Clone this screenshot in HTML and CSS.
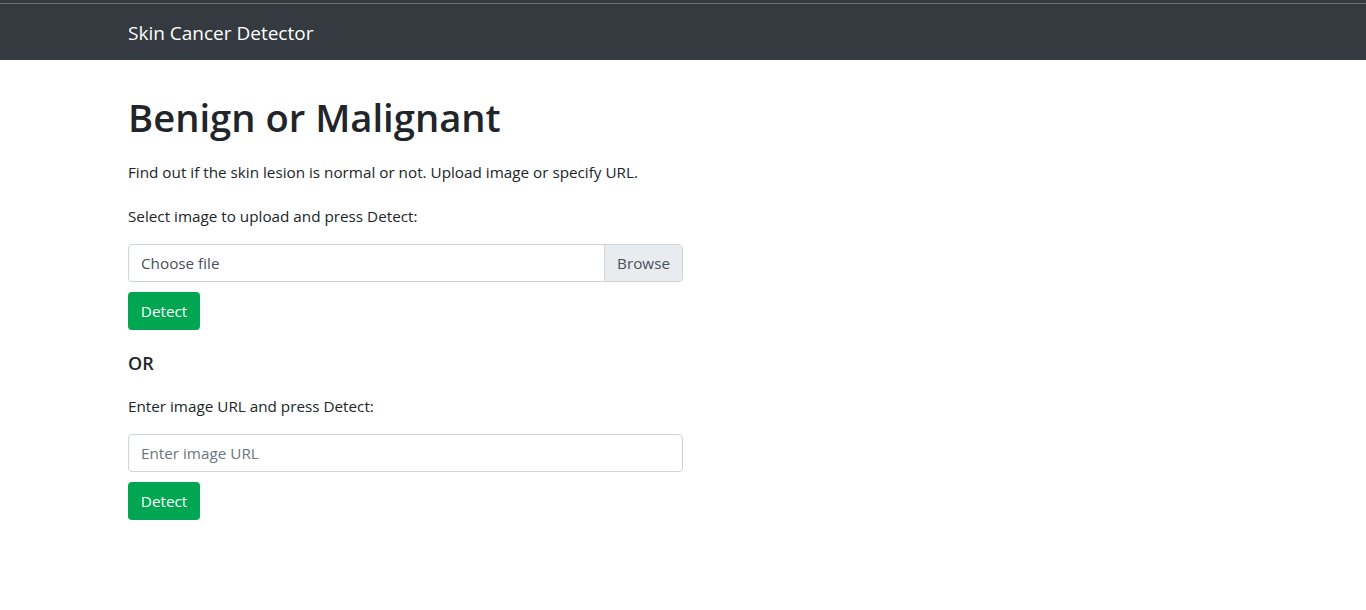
FILE: index.html
```html
<!DOCTYPE html>
<html lang="en">
<head>
<meta charset="utf-8">
<title>Skin Cancer Detector</title>
<link rel="stylesheet" href="styles.css">
</head>
<body>
<div class="topline"></div>
<nav class="navbar">
  <div class="container">
    <a class="brand" href="#">Skin Cancer Detector</a>
  </div>
</nav>
<main class="container main">
  <h1 class="title">Benign or Malignant</h1>
  <p class="lead-text">Find out if the skin lesion is normal or not. Upload image or specify URL.</p>
  <form class="form">
    <p class="label">Select image to upload and press Detect:</p>
    <div class="file">
      <span class="file-text">Choose file</span>
      <span class="file-btn">Browse</span>
    </div>
    <button type="button" class="btn">Detect</button>
    <h5 class="or">OR</h5>
    <p class="label">Enter image URL and press Detect:</p>
    <input class="input" type="text" placeholder="Enter image URL">
    <button type="button" class="btn">Detect</button>
  </form>
</main>
</body>
</html>
```
FILE: styles.css
```css
* { box-sizing: border-box; }
html, body { margin: 0; padding: 0; }
body {
  font-family: "Open Sans", "Noto Sans", sans-serif;
  font-size: 15.25px;
  line-height: 24px;
  color: #212529;
  background: #fff;
}
.container {
  width: 1140px;
  margin: 0 auto;
  padding: 0 15px;
}
.topline {
  height: 4px;
  background: #343a40;
  border-bottom: 1px solid #6e7175;
}
.navbar {
  background: #343a40;
  height: 56px;
  display: flex;
  align-items: center;
}
.brand {
  color: #fff;
  text-decoration: none;
  font-size: 19px;
  line-height: 30px;
  position: relative;
  top: 1px;
}
.main { padding-top: 33px; }
.title {
  margin: 0 0 19px;
  font-size: 38.2px;
  line-height: 48px;
  font-weight: 600;
}
.lead-text { margin: 0 0 20px; }
.form { width: 555px; display: flex; flex-direction: column; align-items: flex-start; }
.label { margin: 0 0 16px; }
.file {
  width: 100%;
  height: 38px;
  display: flex;
  border: 1px solid #ced4da;
  border-radius: 4px;
  overflow: hidden;
  color: #495057;
}
.file-text { flex: 1; padding: 6px 12px; }
.file-btn {
  padding: 6px 12px;
  background: #e9ecef;
  border-left: 1px solid #ced4da;
}
.btn {
  margin-top: 10px;
  width: 72px;
  height: 38px;
  padding: 6px 0;
  font: inherit;
  text-align: center;
  color: #fff;
  background: #00a651;
  border: 0;
  border-radius: 4px;
}
.or {
  margin: 22px 0 20px;
  font-size: 18px;
  line-height: 22px;
  font-weight: 600;
}
.input {
  width: 100%;
  height: 38px;
  padding: 6px 12px;
  font: inherit;
  color: #495057;
  border: 1px solid #ced4da;
  border-radius: 4px;
}
.input::placeholder { color: #6c757d; }
```
